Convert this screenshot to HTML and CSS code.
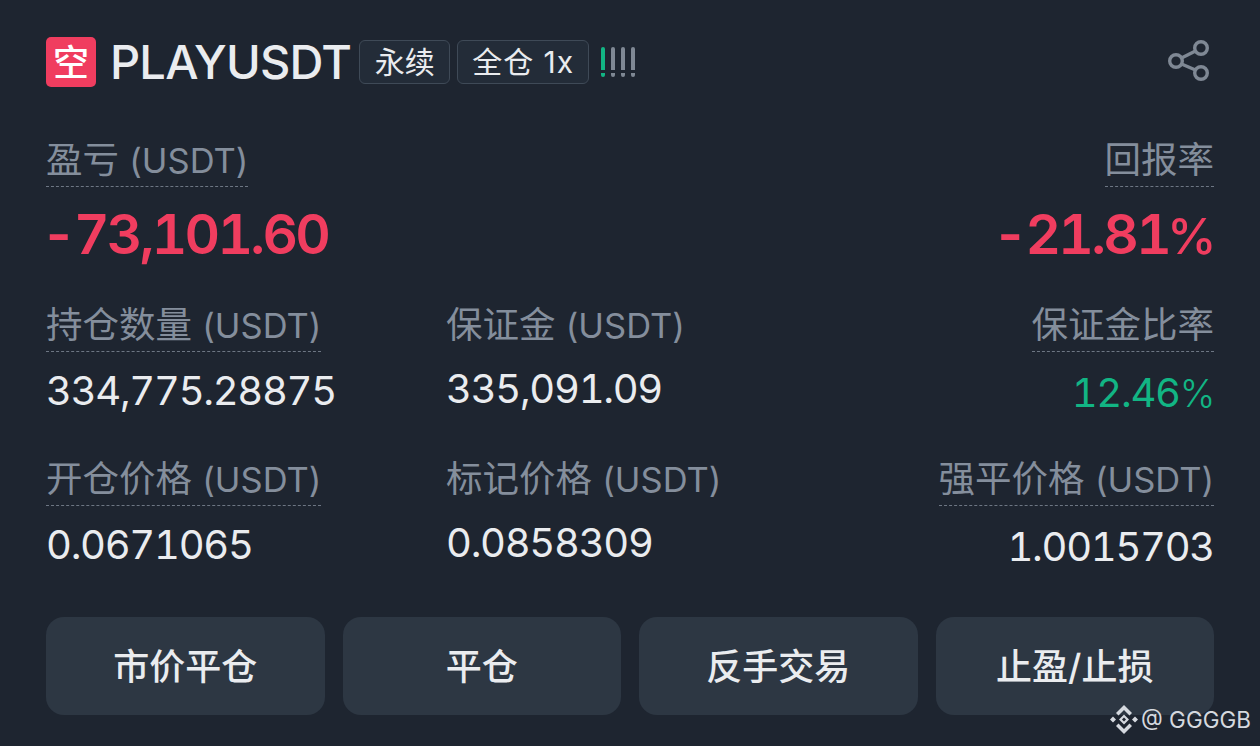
FILE: index.html
```html
<!DOCTYPE html>
<html lang="zh-CN">
<head>
    <meta charset="UTF-8">
    <meta name="viewport" content="width=device-width, initial-scale=1.0">
    <title>PLAYUSDT</title>
    <link rel="stylesheet" href="styles.css">
</head>
<body>

    <div class="card">
        <div class="head">
            <span class="side-badge">空</span>
            <span class="symbol">PLAYUSDT</span>
            <span class="tag tag-perp">永续</span>
            <span class="tag tag-margin">全仓 1x</span>
            <span class="risk"><i class="on"></i><i></i><i></i><i></i></span>
            <svg class="share" width="44" height="44" viewBox="0 0 44 44" fill="none" stroke="#7f8894" stroke-width="3.4">
                <circle cx="33" cy="10" r="6.300"/>
                <circle cx="33" cy="35" r="6.300"/>
                <circle cx="8" cy="23" r="6.300"/>
                <path d="M13.500 20 27.500 13M13.500 26 27.500 32"/>
            </svg>
        </div>

        <div class="pnl-row">
            <div>
                <div class="label"><span>盈亏 <small>(USDT)</small></span></div>
                <div class="pnl">-73,101.60</div>
            </div>
            <div class="right">
                <div class="label"><span>回报率</span></div>
                <div class="pnl">-21.81<small>%</small></div>
            </div>
        </div>

        <div class="stats">
            <div>
                <div class="label"><span>持仓数量 <small>(USDT)</small></span></div>
                <div class="value">334,775.28875</div>
            </div>
            <div class="middle">
                <div class="label"><span>保证金 <small>(USDT)</small></span></div>
                <div class="value">335,091.09</div>
            </div>
            <div class="right">
                <div class="label"><span>保证金比率</span></div>
                <div class="value green">12.46<small>%</small></div>
            </div>
            <div>
                <div class="label"><span>开仓价格 <small>(USDT)</small></span></div>
                <div class="value">0.0671065</div>
            </div>
            <div class="middle">
                <div class="label"><span>标记价格 <small>(USDT)</small></span></div>
                <div class="value">0.0858309</div>
            </div>
            <div class="right">
                <div class="label"><span>强平价格 <small>(USDT)</small></span></div>
                <div class="value">1.0015703</div>
            </div>
        </div>

        <div class="actions">
            <button class="btn">市价平仓</button>
            <button class="btn">平仓</button>
            <button class="btn">反手交易</button>
            <button class="btn">止盈/止损</button>
        </div>
    </div>

    <!-- Watermark -->
    <div class="watermark">
        <svg width="28" height="29" viewBox="0 0 28 29" fill="#d5d9df" fill-rule="evenodd">
            <path d="M14 0 22 8 19.500 10.500 14 5 8.500 10.500 6 8ZM14 29 6 21 8.500 18.500 14 24 19.500 18.500 22 21ZM3 11.500 6 14.500 3 17.500 0 14.500ZM25 11.500 28 14.500 25 17.500 22 14.500ZM14 9.500 19 14.500 14 19.500 9 14.500ZM14 12.500 12 14.500 14 16.500 16 14.500Z"/>
        </svg>
        <span>@ GGGGB</span>
    </div>

</body>
</html>
```
FILE: styles.css
```css
body {
    margin: 0;
    padding: 0;
    background-color: #1e2530;
    height: 746px;
    overflow: hidden;
    position: relative;
    font-family: Inter, "Noto Sans CJK SC", sans-serif;
}

.card {
    padding: 37px 46px 0;
}

.head {
    display: flex;
    align-items: center;
    height: 50px;
}

.side-badge {
    width: 50px;
    height: 50px;
    border-radius: 5px;
    background-color: #f03d5f;
    color: #fff;
    font-size: 36px;
    font-weight: 500;
    display: flex;
    justify-content: center;
    align-items: center;
    box-sizing: border-box;
    padding-bottom: 4px;
    margin-right: 14px;
}

.symbol {
    color: #eaecef;
    font-size: 47px;
    font-weight: 500;
    letter-spacing: -0.8px;
    margin-right: 8px;
    margin-top: -2px;
}

.tag {
    height: 44px;
    border: 1.500px solid #3f4a57;
    border-radius: 6px;
    background-color: #232c38;
    color: #eaecef;
    font-size: 30px;
    display: flex;
    justify-content: center;
    align-items: center;
    box-sizing: border-box;
    padding-bottom: 3px;
    margin-right: 7px;
    margin-top: -1px;
}

.tag-perp {
    width: 91px;
}

.tag-margin {
    width: 132px;
    margin-right: 12px;
    letter-spacing: 1px;
}

.risk {
    display: flex;
    gap: 6px;
    margin-top: -1px;
}

.risk i {
    display: block;
    width: 4px;
    height: 30px;
    border-radius: 2px;
    background: linear-gradient(#7f8894 0, #7f8894 76%, transparent 76%, transparent 88%, #7f8894 88%);
}

.risk i.on {
    background: linear-gradient(#12b584 0, #12b584 76%, transparent 76%, transparent 88%, #12b584 88%);
}

.share {
    margin-left: auto;
    margin-top: -4px;
    margin-right: 2px;
}

.label {
    color: #848e9c;
    font-size: 36.500px;
    line-height: 47px;
    height: 50px;
}

.label small {
    font-size: 34.500px;
}

.label span {
    display: inline-block;
    height: 49px;
    border-bottom: 1.500px dashed #6d7683;
}

.middle .label span {
    border-bottom: none;
}

.right {
    text-align: right;
}

.pnl-row {
    display: flex;
    justify-content: space-between;
    margin-top: 50px;
}

.pnl {
    color: #f03d5f;
    font-size: 55px;
    font-weight: 600;
    font-variant-numeric: tabular-nums;
    letter-spacing: -2.700px;
    line-height: 60px;
    margin: 17px 0 0 -5px;
}

.pnl small {
    font-size: 50px;
    font-weight: 500;
    margin-left: -2px;
}

.stats {
    display: grid;
    grid-template-columns: 400px 1fr auto;
    row-gap: 35px;
    margin-top: 36px;
}

.value {
    color: #eaecef;
    font-size: 40px;
    font-variant-numeric: tabular-nums;
    letter-spacing: -1.300px;
    line-height: 56px;
    margin-top: 11px;
}

.value small {
    font-size: 38px;
    font-weight: 300;
}

/* values don't sit on one line across the columns in this view */
.middle .value {
    margin-top: 9px;
}

.right .value {
    margin-top: 13px;
}

.green {
    color: #12b584;
}

.actions {
    display: grid;
    grid-template-columns: repeat(4, 1fr);
    gap: 18px;
    margin-top: 42px;
}

.btn {
    height: 98px;
    border: none;
    border-radius: 18px;
    background-color: #2d3743;
    color: #eaecef;
    font-family: inherit;
    font-size: 36px;
    font-weight: 500;
    padding: 0 0 4px;
}

.watermark {
    position: absolute;
    right: 9px;
    bottom: 12px;
    display: flex;
    align-items: center;
    gap: 3px;
    color: #d5d9df;
    font-size: 22.500px;
}
```
